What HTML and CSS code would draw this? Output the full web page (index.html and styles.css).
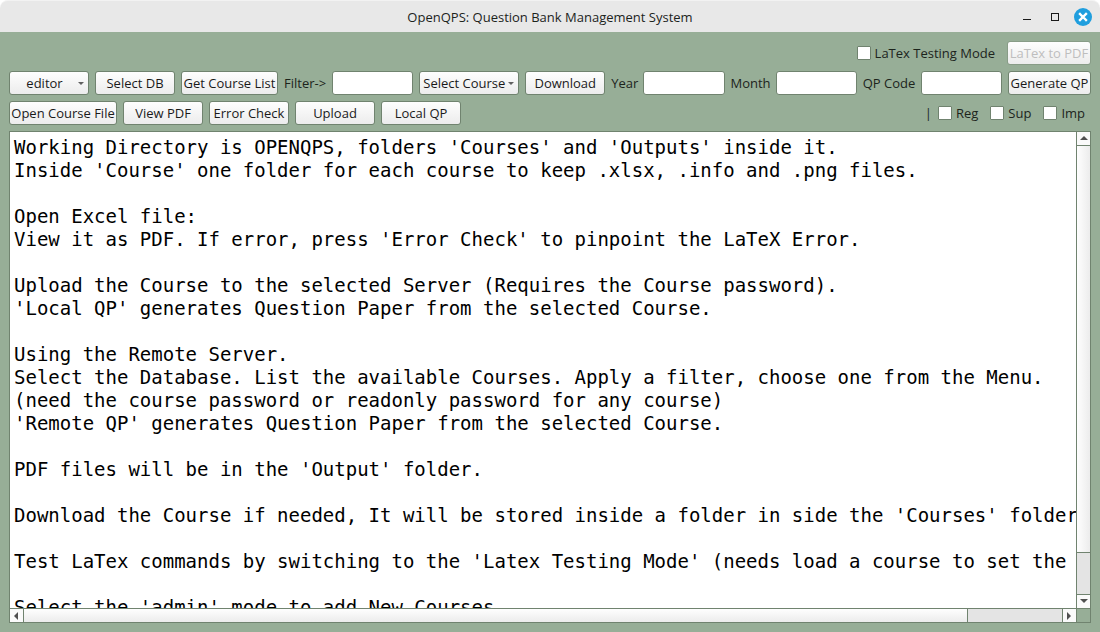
FILE: index.html
```html
<!DOCTYPE html>
<html lang="en">
<head>
  <meta charset="UTF-8" />
  <title>OpenQPS: Question Bank Management System</title>
  <link rel="stylesheet" href="styles.css">
</head>
<body>
  <header class="titlebar">
    <h1 class="title">OpenQPS: Question Bank Management System</h1>
    <div class="window-buttons">
      <button class="window-button" aria-label="Minimize">
        <svg width="18" height="18" viewBox="0 0 18 18"><path d="M5 11h8v1H5z" fill="#1a1a1a" /></svg>
      </button>
      <button class="window-button" aria-label="Maximize">
        <svg width="18" height="18" viewBox="0 0 18 18"><path d="M5 5h8v8H5zM6 6v6h6V6z" fill="#1a1a1a" fill-rule="evenodd" /></svg>
      </button>
      <button class="window-button" aria-label="Close">
        <svg width="18" height="18" viewBox="0 0 18 18"><circle cx="9" cy="9" r="9" fill="#1f9ede" /><path d="M6 6l6 6M12 6l-6 6" stroke="#fff" stroke-width="2.4" stroke-linecap="square" /></svg>
      </button>
    </div>
  </header>

  <main class="window">
    <div class="row row-latex">
      <label class="check"><input type="checkbox">LaTex Testing Mode</label>
      <button class="button button-latex" disabled>LaTex to PDF</button>
    </div>

    <div class="row row-remote">
      <span class="dropdown dropdown-mode">
        <select aria-label="Mode"><option>editor</option><option>admin</option></select>
      </span>
      <button class="button">Select DB</button>
      <button class="button">Get Course List</button>
      <label for="filter">Filter-&gt;</label>
      <input class="field" id="filter" type="text">
      <span class="dropdown">
        <select aria-label="Course"><option>Select Course</option></select>
      </span>
      <button class="button">Download</button>
      <label for="year">Year</label>
      <input class="field" id="year" type="text">
      <label for="month">Month</label>
      <input class="field" id="month" type="text">
      <label for="qpcode">QP Code</label>
      <input class="field" id="qpcode" type="text">
      <button class="button">Generate QP</button>
    </div>

    <div class="row row-local">
      <button class="button button-open">Open Course File</button>
      <button class="button">View PDF</button>
      <button class="button">Error Check</button>
      <button class="button">Upload</button>
      <button class="button">Local QP</button>
      <div class="exam-types">
        <span>|</span>
        <label class="check"><input type="checkbox">Reg</label>
        <label class="check"><input type="checkbox">Sup</label>
        <label class="check"><input type="checkbox">Imp</label>
      </div>
    </div>

    <div class="output">
      <textarea class="log" wrap="off" readonly aria-label="Messages">
Working Directory is OPENQPS, folders 'Courses' and 'Outputs' inside it.
Inside 'Course' one folder for each course to keep .xlsx, .info and .png files.

Open Excel file:
View it as PDF. If error, press 'Error Check' to pinpoint the LaTeX Error.

Upload the Course to the selected Server (Requires the Course password).
'Local QP' generates Question Paper from the selected Course.

Using the Remote Server.
Select the Database. List the available Courses. Apply a filter, choose one from the Menu.
(need the course password or readonly password for any course)
'Remote QP' generates Question Paper from the selected Course.

PDF files will be in the 'Output' folder.

Download the Course if needed, It will be stored inside a folder in side the 'Courses' folder

Test LaTex commands by switching to the 'Latex Testing Mode' (needs load a course to set the

Select the 'admin' mode to add New Courses</textarea>
      <div class="scrollbar scrollbar-v">
        <button class="arrow" aria-label="Scroll up"><svg width="8" height="5" viewBox="0 0 8 5"><path d="M0 4L4 0L8 4z" /></svg></button>
        <div class="thumb"></div>
        <div class="trough"></div>
        <button class="arrow" aria-label="Scroll down"><svg width="8" height="5" viewBox="0 0 8 5"><path d="M0 0h8L4 4z" /></svg></button>
      </div>
      <div class="scrollbar scrollbar-h">
        <button class="arrow" aria-label="Scroll left"><svg width="5" height="8" viewBox="0 0 5 8"><path d="M4 0v8L0 4z" /></svg></button>
        <div class="thumb"></div>
        <div class="trough"></div>
        <button class="arrow" aria-label="Scroll right"><svg width="5" height="8" viewBox="0 0 5 8"><path d="M0 0L4 4L0 8z" /></svg></button>
      </div>
      <div class="corner"></div>
    </div>
  </main>
</body>
</html>
```
FILE: styles.css
```css
* {
  box-sizing: border-box;
}

body {
  margin: 0;
  height: 100vh;
  display: flex;
  flex-direction: column;
  background: #fff;
  color: #1c241c;
  font-family: "Open Sans", "Noto Sans", sans-serif;
  font-size: 13px;
  line-height: 18px;
}

button, input, select, textarea {
  margin: 0;
  font: inherit;
  color: inherit;
}

/* title bar */
.titlebar {
  display: grid;
  grid-template-columns: 1fr auto 1fr;
  align-items: center;
  height: 32px;
  flex-shrink: 0;
  padding: 0 8px;
  background: #e8e8e8;
  border-top: 1px solid #f2f2f2;
  border-radius: 8px 8px 0 0;
}
.title {
  grid-column: 2;
  margin: 0;
  font-size: 13px;
  font-weight: normal;
}
.window-buttons {
  display: flex;
  justify-content: flex-end;
  gap: 10px;
}
.window-button {
  display: flex;
  width: 18px;
  height: 18px;
  padding: 0;
  border: 0;
  background: none;
}

/* tool rows */
.window {
  flex: 1;
  min-height: 0;
  display: flex;
  flex-direction: column;
  gap: 6px;
  padding: 9px;
  background: #97ae97;
}
.row {
  flex-shrink: 0;
  height: 24px;
  align-items: center;
  white-space: nowrap;
}
.row-latex {
  display: flex;
  justify-content: flex-end;
  gap: 12px;
}
.row-remote {
  display: grid;
  grid-template-columns: 80px 80px 97px 42px 1fr 100px 80px 26px 1fr 39px 1fr 52px 1fr 83px;
  gap: 6px;
}
.row-local {
  display: flex;
  gap: 6px;
}

.button,
.dropdown select,
.field {
  height: 24px;
  border: 1px solid #70836f;
  border-radius: 3px;
}
.button,
.dropdown select {
  width: 80px;
  padding: 0;
  background: linear-gradient(#fefefe, #ececec);
  color: #1a1a1a;
}
.row-remote .button,
.dropdown select,
.field {
  width: 100%;
}
.button:disabled {
  color: #bebebe;
  border-color: #889c87;
}
.button-latex {
  width: 84px;
}
.button-open {
  width: 108px;
}
.field {
  min-width: 0;
  padding: 0 4px;
  background: #fff;
}

.dropdown {
  position: relative;
}
.dropdown select {
  display: block;
  appearance: none;
  padding: 0 12px 0 3px;
}
.dropdown-mode select {
  text-align: center;
  text-align-last: center;
}
.dropdown::after {
  content: "";
  position: absolute;
  top: 11px;
  right: 5px;
  border: 3px solid transparent;
  border-top-color: #606060;
  border-bottom: 0;
  pointer-events: none;
}

.check {
  display: flex;
  align-items: center;
  gap: 4px;
}
.check input {
  appearance: none;
  width: 14px;
  height: 14px;
  background: #fff;
  border: 1px solid #70836f;
  border-radius: 1px;
}
.exam-types {
  display: flex;
  margin-left: auto;
  margin-right: 6px;
  gap: 12px;
}
.exam-types span {
  margin-right: -6px;
}

/* output area */
.output {
  flex: 1;
  min-height: 0;
  display: grid;
  grid-template-columns: 1fr 14px;
  grid-template-rows: 1fr 14px;
  border: 1px solid #70836f;
}
.log {
  width: 100%;
  height: 100%;
  padding: 4px;
  border: 0;
  outline: 0;
  resize: none;
  overflow: hidden;
  background: #fff;
  color: #000;
  font-family: "DejaVu Sans Mono", monospace;
  font-size: 19px;
  line-height: 23px;
}

.scrollbar {
  display: flex;
  background: #e4e4e4;
}
.scrollbar-v {
  flex-direction: column;
  border-left: 1px solid #70836f;
}
.scrollbar-h {
  border-top: 1px solid #70836f;
}
.arrow {
  display: flex;
  align-items: center;
  justify-content: center;
  flex: 0 0 14px;
  padding: 0;
  border: 0 solid #70836f;
  background: #fafafa;
  fill: #505050;
}
.trough {
  flex: 1;
}
.thumb {
  flex: 10;
  border: 0 solid #70836f;
}
.scrollbar-v .arrow:first-child,
.scrollbar-v .thumb {
  border-bottom-width: 1px;
}
.scrollbar-v .arrow:last-child {
  border-top-width: 1px;
}
.scrollbar-v .thumb {
  background: linear-gradient(to right, #fefefe, #ececec);
}
.scrollbar-h .arrow:first-child,
.scrollbar-h .thumb {
  border-right-width: 1px;
}
.scrollbar-h .arrow:last-child {
  border-left-width: 1px;
}
.scrollbar-h .thumb {
  background: linear-gradient(#fefefe, #ececec);
}
.corner {
  border: 0 solid #70836f;
  border-width: 1px 0 0 1px;
}
```
